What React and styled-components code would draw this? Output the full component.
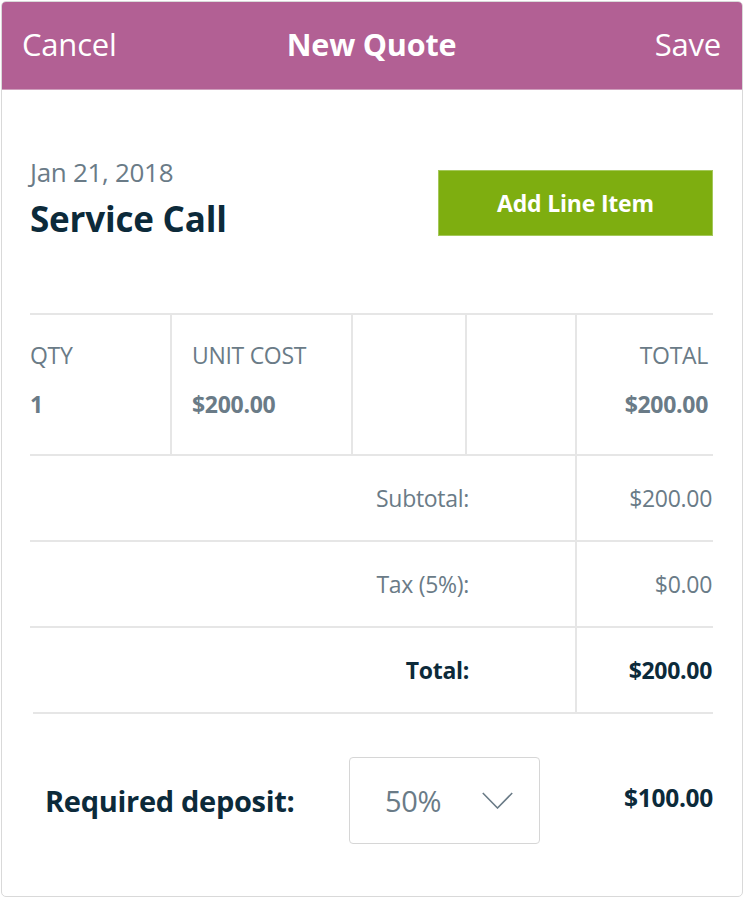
import React from "react";
import styled, { createGlobalStyle } from "styled-components";

const Global = createGlobalStyle`
  html, body { margin: 0; padding: 0; background: #ffffff; }
  body { font-family: "Open Sans", "Noto Sans", sans-serif; }
  * { box-sizing: border-box; }
`;

const Page = styled.div`
  padding: 1px 1px 0 1px;
`;

const Card = styled.div`
  height: 896px;
  border: 1px solid #d9d9d9;
  border-radius: 5px;
  overflow: hidden;
  display: flex;
  flex-direction: column;
`;

const Header = styled.header`
  height: 88px;
  background: #b26094;
  border-bottom: 1px solid #cf9fbd;
  display: grid;
  grid-template-columns: 1fr auto 1fr;
  align-items: center;
  padding: 0 21px 4px 20px;
  color: #ffffff;
`;

const HeaderLink = styled.span`
  font-size: 31px;
  font-weight: 400;
  letter-spacing: -0.2px;
  justify-self: ${(p) => (p.$end ? "end" : "start")};
`;

const HeaderTitle = styled.span`
  font-size: 30.5px;
  font-weight: 700;
  letter-spacing: -0.2px;
`;

const Body = styled.div`
  flex: 1;
  padding: 0 29px 0 28px;
  display: flex;
  flex-direction: column;
`;

const TopRow = styled.div`
  display: flex;
  justify-content: space-between;
  align-items: flex-start;
  padding-top: 64px;
  height: 223px;
`;

const TitleBlock = styled.div`
  display: flex;
  flex-direction: column;
`;

const DateText = styled.div`
  font-size: 26px;
  color: #6a7b87;
  line-height: 36px;
  letter-spacing: -0.3px;
`;

const Title = styled.h1`
  margin: 5px 0 0 0;
  font-size: 35px;
  font-weight: 700;
  color: #0c2a3a;
  line-height: 48px;
  letter-spacing: -0.2px;
`;

const AddButton = styled.button`
  margin-top: 16px;
  width: 275px;
  height: 66px;
  background: #7eae10;
  border: 1px solid #a4c85a;
  color: #ffffff;
  font-family: inherit;
  font-size: 23px;
  font-weight: 700;
  letter-spacing: -0.2px;
  cursor: pointer;
`;

const ItemGrid = styled.div`
  display: grid;
  grid-template-columns: 140px 181px 114px 110px 1fr;
  border-top: 2px solid #e6e6e6;
  border-bottom: 2px solid #e6e6e6;
  height: 143px;
`;

const ItemCell = styled.div`
  display: flex;
  flex-direction: column;
  align-items: ${(p) => (p.$right ? "flex-end" : "flex-start")};
  padding: 24px ${(p) => (p.$right ? "5px" : "0")} 0 ${(p) => (p.$first ? "0" : p.$right ? "0" : "20px")};
  border-left: ${(p) => (p.$first ? "none" : "2px solid #e6e6e6")};
`;

const ColHead = styled.div`
  font-size: 23px;
  color: #6a7b87;
  line-height: 32px;
  letter-spacing: -0.3px;
`;

const ColValue = styled.div`
  margin-top: 17px;
  font-size: 23px;
  font-weight: 700;
  color: #6a7b87;
  line-height: 32px;
  letter-spacing: -0.3px;
`;

const SumRow = styled.div`
  display: grid;
  grid-template-columns: 1fr 138px;
  height: 86px;
  border-bottom: 2px solid #e6e6e6;
  margin-left: ${(p) => (p.$inset ? "3px" : "0")};
`;

const SumLabel = styled.div`
  display: flex;
  align-items: center;
  justify-content: flex-end;
  padding-right: 106px;
  font-size: 23px;
  font-weight: ${(p) => (p.$strong ? 700 : 400)};
  color: ${(p) => (p.$strong ? "#0c2a3a" : "#6a7b87")};
  letter-spacing: -0.3px;
`;

const SumValue = styled.div`
  display: flex;
  align-items: center;
  justify-content: flex-end;
  padding-right: 1px;
  border-left: 2px solid #e6e6e6;
  font-size: 23px;
  font-weight: ${(p) => (p.$strong ? 700 : 400)};
  color: ${(p) => (p.$strong ? "#0c2a3a" : "#6a7b87")};
  letter-spacing: -0.3px;
`;

const DepositRow = styled.div`
  display: flex;
  align-items: center;
  margin-top: 43px;
  height: 86px;
`;

const DepositLabel = styled.div`
  width: 319px;
  padding-left: 15px;
  font-size: 29px;
  font-weight: 700;
  color: #0c2a3a;
  letter-spacing: -0.3px;
`;

const Select = styled.div`
  width: 191px;
  height: 87px;
  border: 1px solid #d6d6d6;
  border-radius: 4px;
  display: flex;
  align-items: center;
  justify-content: space-between;
  padding: 0 26px 0 35px;
  font-size: 29px;
  color: #6a7b87;
  letter-spacing: -0.3px;
`;

const DepositValue = styled.div`
  flex: 1;
  text-align: right;
  font-size: 24.5px;
  font-weight: 700;
  color: #0c2a3a;
  letter-spacing: -0.3px;
  margin-bottom: 6px;
`;

const Chevron = () => (
  <svg width="31" height="17" viewBox="0 0 31 17" fill="none">
    <path d="M0.8 1 L15.5 16 L30.2 1" stroke="#6a7b87" strokeWidth="1.6" />
  </svg>
);

export default function App() {
  return (
    <Page>
      <Global />
      <Card>
        <Header>
          <HeaderLink>Cancel</HeaderLink>
          <HeaderTitle>New Quote</HeaderTitle>
          <HeaderLink $end>Save</HeaderLink>
        </Header>
        <Body>
          <TopRow>
            <TitleBlock>
              <DateText>Jan 21, 2018</DateText>
              <Title>Service Call</Title>
            </TitleBlock>
            <AddButton>Add Line Item</AddButton>
          </TopRow>
          <ItemGrid>
            <ItemCell $first>
              <ColHead>QTY</ColHead>
              <ColValue>1</ColValue>
            </ItemCell>
            <ItemCell>
              <ColHead>UNIT COST</ColHead>
              <ColValue>$200.00</ColValue>
            </ItemCell>
            <ItemCell />
            <ItemCell />
            <ItemCell $right>
              <ColHead>TOTAL</ColHead>
              <ColValue>$200.00</ColValue>
            </ItemCell>
          </ItemGrid>
          <SumRow>
            <SumLabel>Subtotal:</SumLabel>
            <SumValue>$200.00</SumValue>
          </SumRow>
          <SumRow>
            <SumLabel>Tax (5%):</SumLabel>
            <SumValue>$0.00</SumValue>
          </SumRow>
          <SumRow $inset>
            <SumLabel $strong>Total:</SumLabel>
            <SumValue $strong>$200.00</SumValue>
          </SumRow>
          <DepositRow>
            <DepositLabel>Required deposit:</DepositLabel>
            <Select>
              <span>50%</span>
              <Chevron />
            </Select>
            <DepositValue>$100.00</DepositValue>
          </DepositRow>
        </Body>
      </Card>
    </Page>
  );
}
